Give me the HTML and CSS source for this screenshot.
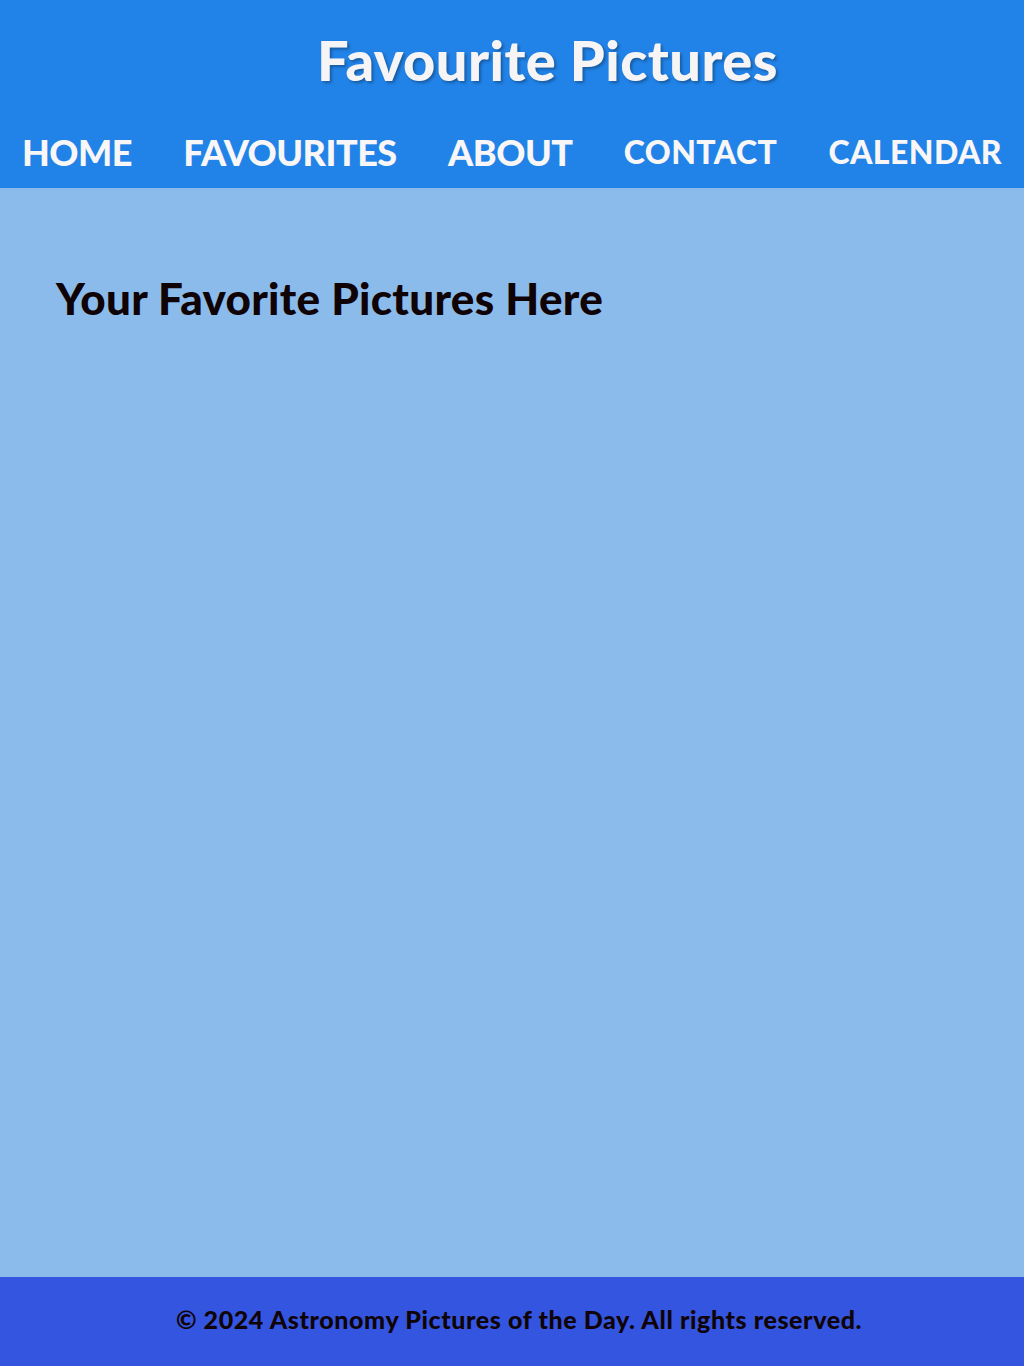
FILE: index.html
```html
<!DOCTYPE html>
<html lang="en">
<head>
<meta charset="utf-8">
<title>Favourite Pictures</title>
<link rel="stylesheet" href="styles.css">
</head>
<body>
<header class="site-header">
  <h1 class="site-title">Favourite Pictures</h1>
  <nav class="main-nav">
    <a class="nav-link" href="#">HOME</a>
    <a class="nav-link" href="#">FAVOURITES</a>
    <a class="nav-link" href="#">ABOUT</a>
    <a class="nav-link nav-link-small" href="#">CONTACT</a>
    <a class="nav-link nav-link-small" href="#">CALENDAR</a>
  </nav>
</header>
<main class="content">
  <h2 class="content-title">Your Favorite Pictures Here</h2>
</main>
<footer class="site-footer">
  <p class="footer-text">© 2024 Astronomy Pictures of the Day. All rights reserved.</p>
</footer>
</body>
</html>
```
FILE: styles.css
```css
html, body {
  margin: 0;
  padding: 0;
}
body {
  min-height: 100vh;
  display: flex;
  flex-direction: column;
  font-family: Lato, "Open Sans", sans-serif;
  font-weight: 900;
}
.site-header {
  background: #2183e8;
  height: 188px;
  box-sizing: border-box;
  padding-top: 32px;
}
.site-title {
  margin: 0 0 0 317px;
  font-size: 56px;
  line-height: 56px;
  font-weight: 900;
  letter-spacing: 0.4px;
  color: #f6f4f4;
  text-shadow: 2px 2px 3px rgba(0, 0, 0, 0.3);
}
.main-nav {
  display: flex;
  align-items: center;
  justify-content: space-between;
  padding: 0 22px 0 22px;
  margin-top: 42px;
}
.nav-link {
  color: #f8f6f6;
  text-decoration: none;
  font-size: 36px;
  letter-spacing: -0.5px;
  line-height: 44px;
}
.nav-link-small {
  font-size: 32px;
  letter-spacing: 0.4px;
}
.content {
  flex: 1;
  background: #8bbbeb;
  padding: 84px 56px 0;
}
.content-title {
  margin: 0;
  font-size: 44px;
  line-height: 52px;
  font-weight: 900;
  letter-spacing: 0.3px;
  color: #0f0306;
}
.site-footer {
  background: #3355e0;
  height: 89px;
  box-sizing: border-box;
  padding: 0 0 5px 14px;
  display: flex;
  align-items: center;
  justify-content: center;
}
.footer-text {
  margin: 0;
  font-size: 25px;
  letter-spacing: 0.6px;
  color: #0f0306;
}
```
